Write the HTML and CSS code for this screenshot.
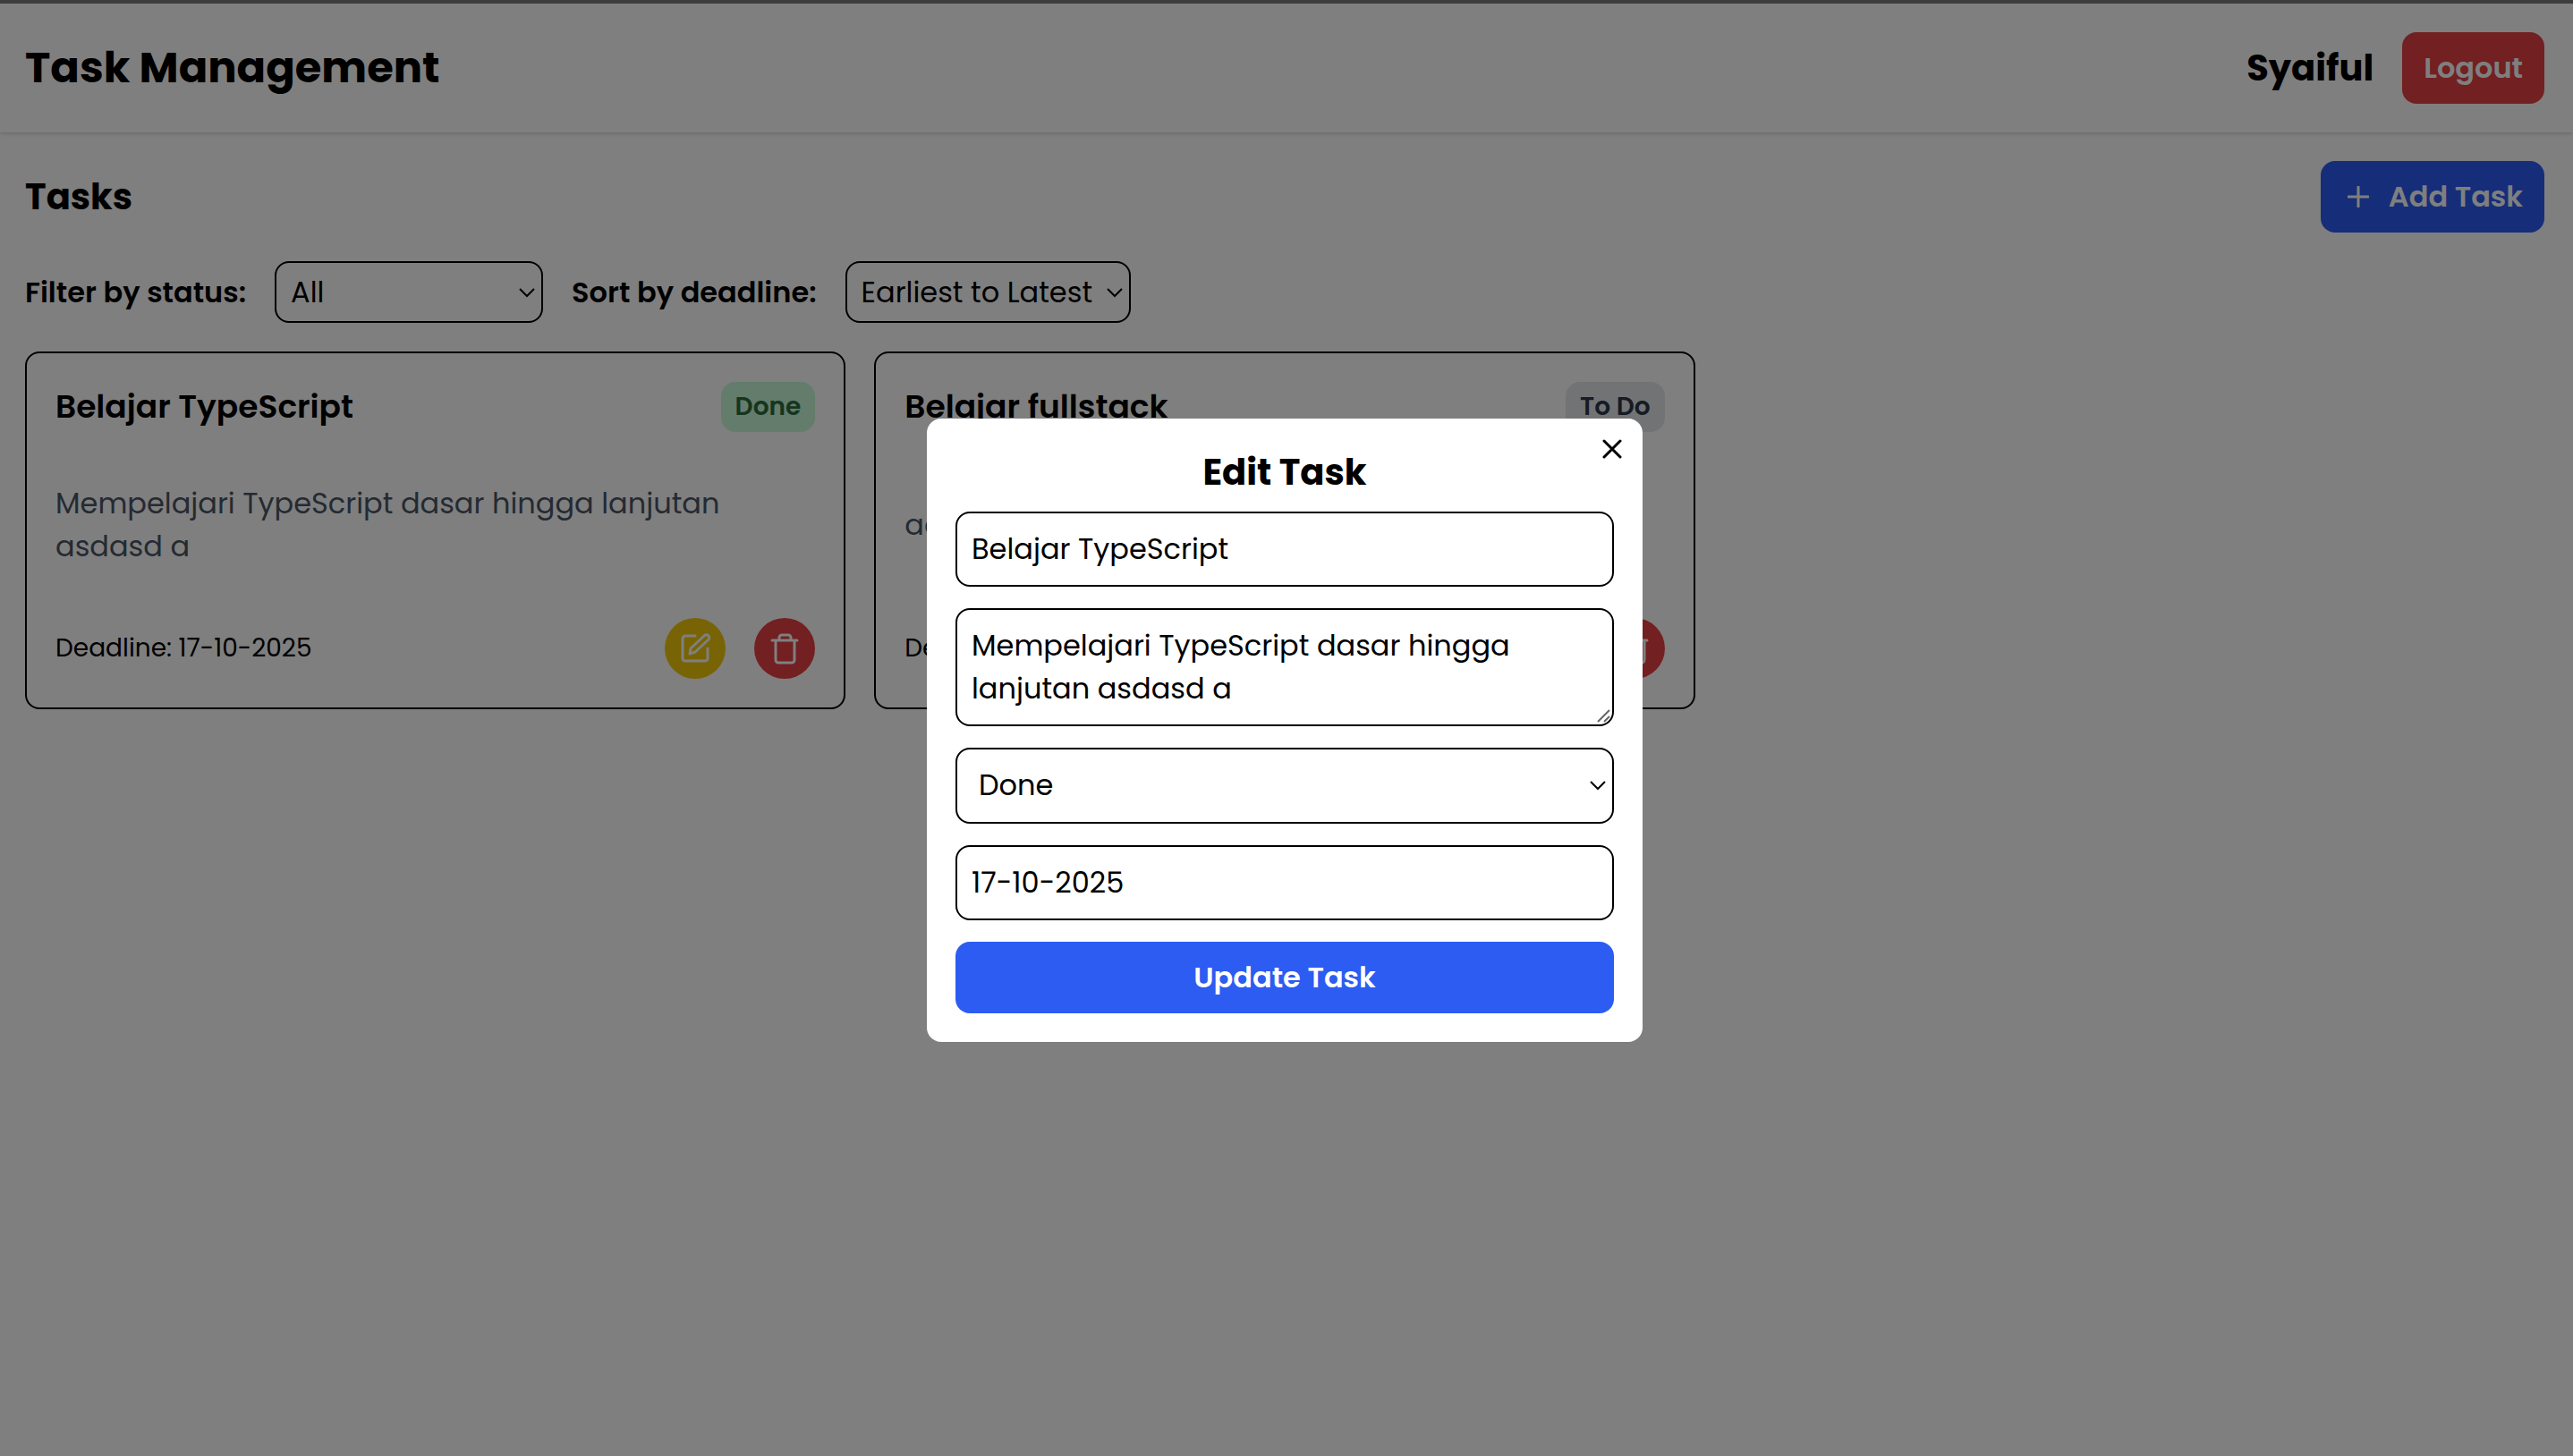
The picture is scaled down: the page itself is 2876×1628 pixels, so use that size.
FILE: index.html
```html
<!DOCTYPE html>
<html lang="en">
<head>
<meta charset="utf-8">
<title>Task Management</title>
<link rel="stylesheet" href="styles.css">
</head>
<body>
<header class="topbar">
  <h1 class="brand">Task Management</h1>
  <div class="account">
    <span class="username">Syaiful</span>
    <button type="button" class="btn btn-danger">Logout</button>
  </div>
</header>
<main class="content">
  <div class="heading-row">
    <h2 class="section-title">Tasks</h2>
    <button type="button" class="btn btn-primary">
      <svg class="icon-plus" viewBox="0 0 24 24" aria-hidden="true"><path d="M12 1v22M1 12h22"/></svg>
      Add Task
    </button>
  </div>
  <div class="filters">
    <label class="filter-label" for="status-filter">Filter by status:</label>
    <select class="select filter-status" id="status-filter"><option>All</option><option>To Do</option><option>Done</option></select>
    <label class="filter-label" for="deadline-sort">Sort by deadline:</label>
    <select class="select filter-sort" id="deadline-sort"><option>Earliest to Latest</option><option>Latest to Earliest</option></select>
  </div>
  <section class="cards">
    <article class="card">
      <div class="card-head">
        <h3 class="card-title">Belajar TypeScript</h3>
        <span class="badge badge-done">Done</span>
      </div>
      <p class="card-text">Mempelajari TypeScript dasar hingga lanjutan asdasd a</p>
      <div class="card-foot">
        <span class="deadline">Deadline: 17-10-2025</span>
        <div class="actions">
          <button type="button" class="round round-edit" aria-label="Edit"><svg class="icon" viewBox="0 0 36 36" aria-hidden="true"><path d="M18 4H7a3 3 0 0 0-3 3v22a3 3 0 0 0 3 3h22a3 3 0 0 0 3-3V18M12 24l1-6L28 4a3 3 0 0 1 5 4L18 22z"/></svg></button>
          <button type="button" class="round round-delete" aria-label="Delete"><svg class="icon" viewBox="0 0 36 36" aria-hidden="true"><path d="M4 9h28M8 9v22a3 3 0 0 0 3 3h15a3 3 0 0 0 3-3V9M12 9V6a3 3 0 0 1 3-3h7a3 3 0 0 1 3 3v3"/></svg></button>
        </div>
      </div>
    </article>
    <article class="card">
      <div class="card-head">
        <h3 class="card-title">Belajar fullstack</h3>
        <span class="badge badge-todo">To Do</span>
      </div>
      <p class="card-text">ad</p>
      <div class="card-foot">
        <span class="deadline">Deadline: 17-10-2025</span>
        <div class="actions">
          <button type="button" class="round round-edit" aria-label="Edit"><svg class="icon" viewBox="0 0 36 36" aria-hidden="true"><path d="M18 4H7a3 3 0 0 0-3 3v22a3 3 0 0 0 3 3h22a3 3 0 0 0 3-3V18M12 24l1-6L28 4a3 3 0 0 1 5 4L18 22z"/></svg></button>
          <button type="button" class="round round-delete" aria-label="Delete"><svg class="icon" viewBox="0 0 36 36" aria-hidden="true"><path d="M4 9h28M8 9v22a3 3 0 0 0 3 3h15a3 3 0 0 0 3-3V9M12 9V6a3 3 0 0 1 3-3h7a3 3 0 0 1 3 3v3"/></svg></button>
        </div>
      </div>
    </article>
  </section>
</main>
<div class="overlay">
  <form class="modal" role="dialog" aria-labelledby="modal-title">
    <button type="button" class="close" aria-label="Close"><svg class="icon-close" viewBox="0 0 24 24" aria-hidden="true"><path d="M3 3l18 18M21 3L3 21"/></svg></button>
    <h2 class="modal-title" id="modal-title">Edit Task</h2>
    <div class="fields">
      <input class="field" type="text" aria-label="Title" value="Belajar TypeScript">
      <textarea class="field field-area" rows="2" aria-label="Description">Mempelajari TypeScript dasar hingga lanjutan asdasd a</textarea>
      <select class="select field field-select" aria-label="Status"><option>Done</option><option>To Do</option></select>
      <input class="field" type="text" aria-label="Deadline" value="17-10-2025">
      <button type="submit" class="btn btn-primary btn-block">Update Task</button>
    </div>
  </form>
</div>
</body>
</html>
```
FILE: styles.css
```css
* { box-sizing: border-box; margin: 0; }

body {
  min-height: 100vh;
  border-top: 4px solid #7a7a7a;
  background: #fff;
  color: #000;
  font: 400 32px/48px Poppins, Inter, sans-serif;
}

button, input, select, textarea { font: inherit; color: inherit; }

.topbar {
  display: flex;
  justify-content: space-between;
  align-items: center;
  padding: 32px 32px 32px 28px;
  box-shadow: 0 2px 4px rgba(0, 0, 0, 0.15);
}
.brand { font-size: 48px; font-weight: 700; line-height: 64px; }
.account { display: flex; align-items: center; gap: 32px; }
.username { font-size: 40px; font-weight: 700; }

.btn {
  display: flex;
  align-items: center;
  justify-content: center;
  gap: 22px;
  padding: 16px 24px;
  border: 0;
  border-radius: 16px;
  color: #fff;
  font-weight: 600;
}
.btn-danger { background: #e54143; }
.btn-primary { background: #2c5cf2; }

.icon-plus { width: 24px; height: 24px; margin-left: 6px; fill: none; stroke: currentColor; stroke-width: 3; stroke-linecap: round; }

.content { padding: 32px 32px 32px 28px; }
.heading-row { display: flex; justify-content: space-between; align-items: center; }
.section-title { font-size: 40px; font-weight: 700; }

.filters { display: flex; align-items: center; gap: 32px; margin: 32px 0; }
.filter-label { font-weight: 600; }

.select {
  appearance: none;
  height: 69px;
  padding: 0 16px;
  border: 2px solid #000;
  border-radius: 16px;
  background: transparent url("data:image/svg+xml,%3Csvg xmlns='http://www.w3.org/2000/svg' width='20' height='14' fill='none' stroke='%23000' stroke-width='2'%3E%3Cpath d='M2 3l8 8 8-8'/%3E%3C/svg%3E") no-repeat right 6px center;
}
.filter-status { width: 300px; }
.filter-sort { width: 319px; }

.cards { display: grid; grid-template-columns: repeat(3, 1fr); gap: 32px; }
.card {
  display: flex;
  flex-direction: column;
  min-height: 400px;
  padding: 32px;
  border: 2px solid #000;
  border-radius: 16px;
}
.card-head, .card-foot, .actions { display: flex; align-items: center; }
.card-head, .card-foot { justify-content: space-between; }
.card-title { font-size: 36px; font-weight: 600; }
.badge { padding: 8px 16px; border-radius: 16px; font-size: 28px; font-weight: 600; line-height: 40px; }
.badge-done { background: #c8f8d6; color: #2c6a3c; }
.badge-todo { background: #e5e7eb; color: #2d3748; }
.card-text { margin: auto 0; color: #4a5565; }
.deadline { font-size: 28px; }
.actions { gap: 32px; }
.round { display: grid; place-items: center; width: 68px; height: 68px; padding: 0; border: 0; border-radius: 50%; color: #fff; }
.round-edit { background: #f0c808; }
.round-delete { background: #e54143; }
.icon { width: 36px; height: 36px; fill: none; stroke: currentColor; stroke-width: 3; stroke-linejoin: round; stroke-linecap: round; }

.overlay {
  position: fixed;
  inset: 0;
  display: grid;
  place-items: center;
  padding: 4px 4px 0 0;
  background: rgba(0, 0, 0, 0.5);
}
.modal { position: relative; width: 800px; padding: 32px; border-radius: 16px; background: #fff; }
.close { position: absolute; top: 14px; right: 14px; display: grid; place-items: center; width: 40px; height: 40px; padding: 0; border: 0; background: none; }
.icon-close { width: 24px; height: 24px; fill: none; stroke: currentColor; stroke-width: 3; stroke-linecap: round; }
.modal-title { margin-bottom: 16px; font-size: 40px; font-weight: 700; line-height: 56px; text-align: center; }
.fields { display: flex; flex-direction: column; gap: 24px; }
.field { width: 100%; height: 84px; padding: 16px; border: 2px solid #000; border-radius: 16px; background-color: #fff; }
.field-area {
  display: block;
  height: auto;
  overflow: hidden;
  resize: none;
  background: #fff url("data:image/svg+xml,%3Csvg xmlns='http://www.w3.org/2000/svg' width='16' height='16' fill='none' stroke='%23666' stroke-width='2'%3E%3Cpath d='M1 14L14 1M8 14l6-6'/%3E%3C/svg%3E") no-repeat right 1px bottom 1px;
}
.field-select { height: 85px; padding: 0 24px; }
.btn-block { width: 100%; }
```
